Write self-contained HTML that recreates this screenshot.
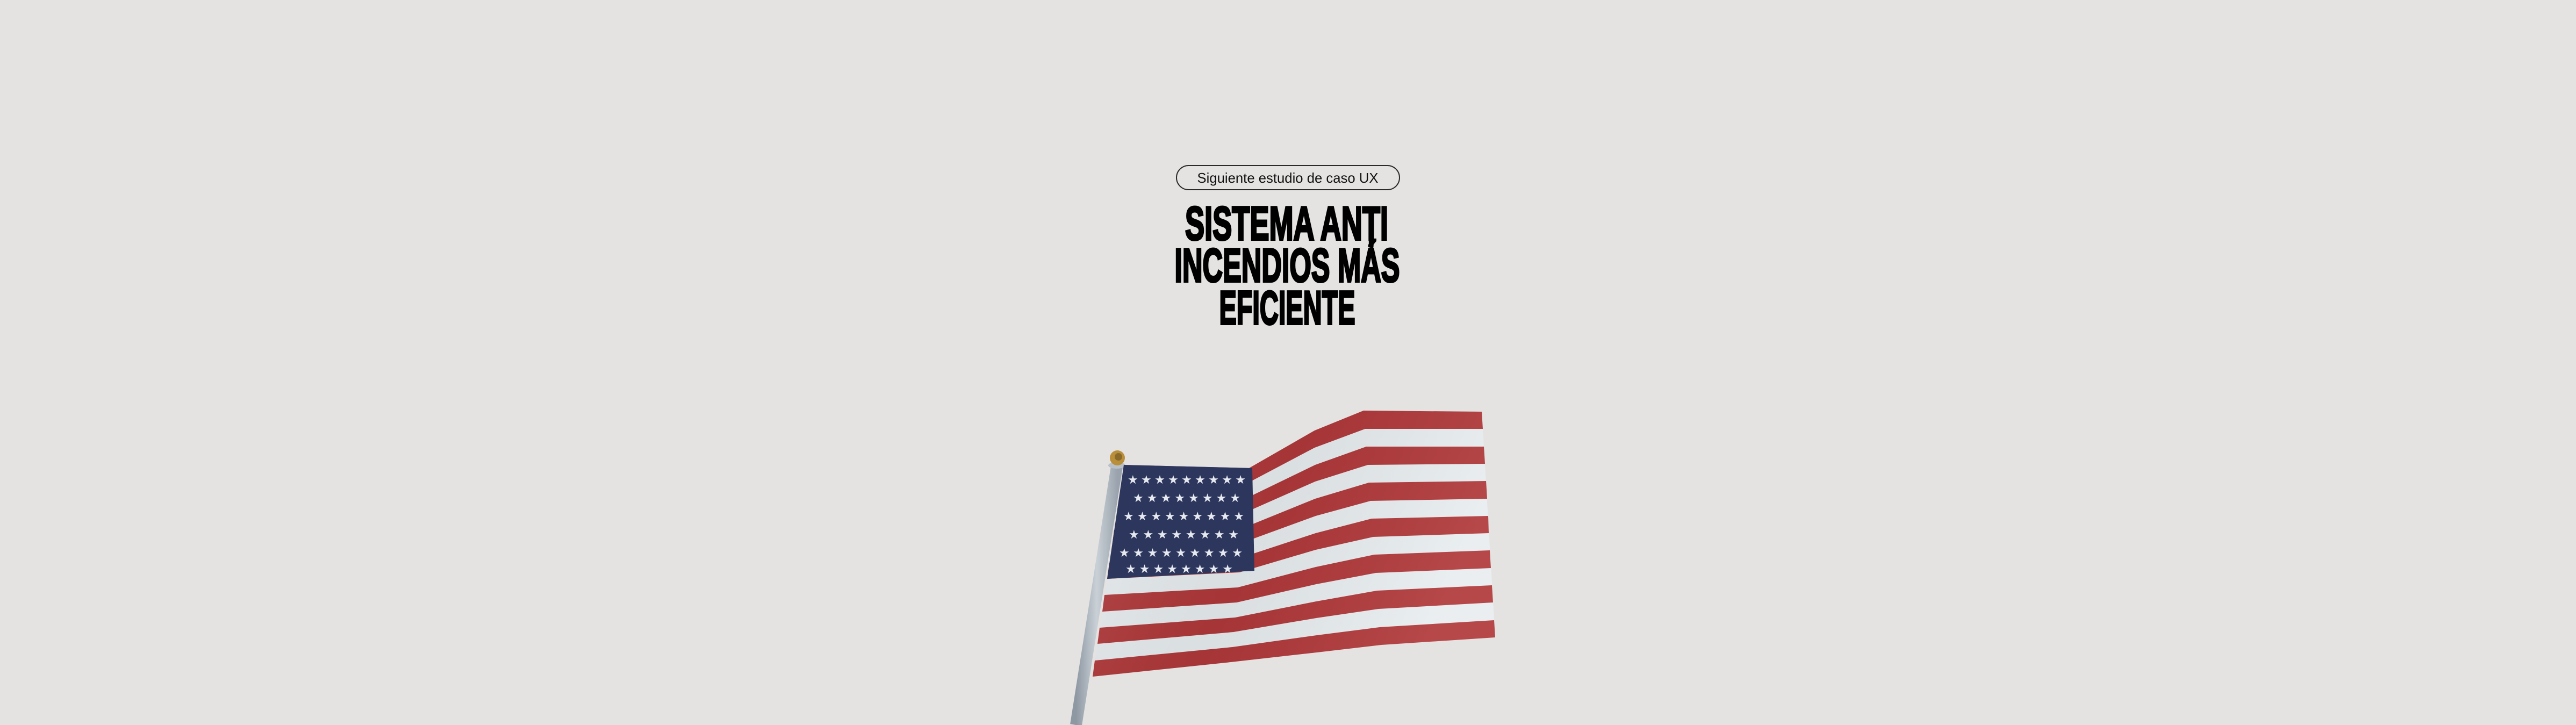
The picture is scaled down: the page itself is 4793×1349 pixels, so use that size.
<!DOCTYPE html>
<html><head><meta charset="utf-8"><style>
html,body{margin:0;padding:0;background:#e4e3e1;}
body{width:4793px;height:1349px;overflow:hidden;position:relative;}
svg{position:absolute;left:0;top:0;}
</style></head><body>
<svg width="4793" height="1349" viewBox="0 0 4793 1349" xmlns="http://www.w3.org/2000/svg">
<defs>
<linearGradient id="pole" x1="0" x2="1" y1="0" y2="0">
<stop offset="0" stop-color="#8e98a3"/><stop offset="0.5" stop-color="#c9d0d6"/><stop offset="1" stop-color="#9aa3ad"/>
</linearGradient>
<linearGradient id="shade" x1="0" x2="1" y1="0" y2="0.3">
<stop offset="0" stop-color="#fff" stop-opacity="0.12"/><stop offset="0.5" stop-color="#000" stop-opacity="0.06"/><stop offset="1" stop-color="#fff" stop-opacity="0.08"/>
</linearGradient>
</defs>
<!-- pill -->
<rect x="2189" y="308" width="415" height="45" rx="22.5" fill="none" stroke="#2a2a2a" stroke-width="2"/>
<text x="2396" y="340" text-anchor="middle" font-family="Liberation Sans, sans-serif" font-size="26" fill="#111" textLength="337" lengthAdjust="spacingAndGlyphs">Siguiente estudio de caso UX</text>
<!-- title -->
<g font-family="Liberation Sans, sans-serif" font-weight="bold" font-size="88" fill="#000" stroke="#000" stroke-width="4" text-anchor="middle">
<text x="2394" y="446" textLength="378" lengthAdjust="spacingAndGlyphs">SISTEMA ANȚI</text>
<text x="2395" y="524" textLength="419" lengthAdjust="spacingAndGlyphs">INCENDIOS MÁS</text>
<text x="2395" y="603" textLength="253" lengthAdjust="spacingAndGlyphs">EFICIENTE</text>
</g>
<!-- pole -->
<line x1="2079" y1="862" x2="2002" y2="1349" stroke="url(#pole)" stroke-width="22"/>
<ellipse cx="2078" cy="866" rx="16" ry="6" fill="#b8c0c8"/>
<circle cx="2079" cy="852" r="14" fill="#b98f3a"/>
<circle cx="2081" cy="850" r="7" fill="#6b5220" opacity="0.6"/>
<!-- flag -->
<polygon fill="#e8edf0" points="2091,865 2324,871 2446,801 2537,764 2757,766 2782,1186 2570,1200 2450,1214 2290,1232 2033,1259"/>
<g fill="#b0383a">
<polygon points="2091,865 2324,871 2446,801 2537,764 2757,766 2759,798 2540,798 2446,833 2321,899 2087,895"/>
<polygon points="2082,926 2319,927 2447,865 2542,831 2761,831 2763,863 2545,865 2447,896 2316,954 2078,956"/>
<polygon points="2073,986 2314,982 2447,928 2547,898 2765,895 2767,928 2550,932 2448,960 2311,1010 2069,1017"/>
<polygon points="2064,1047 2308,1038 2448,992 2552,965 2769,960 2770,992 2555,999 2448,1023 2306,1065 2060,1077"/>
<polygon points="2055,1107 2303,1093 2448,1055 2557,1032 2772,1024 2774,1057 2560,1066 2449,1087 2301,1121 2051,1138"/>
<polygon points="2046,1168 2298,1149 2449,1119 2562,1099 2776,1089 2778,1121 2565,1133 2449,1150 2295,1176 2042,1198"/>
<polygon points="2037,1229 2293,1204 2450,1182 2567,1167 2780,1154 2782,1186 2570,1200 2450,1214 2290,1232 2033,1259"/>
</g>
<polygon fill="url(#shade)" points="2091,865 2324,871 2446,801 2537,764 2757,766 2782,1186 2570,1200 2450,1214 2290,1232 2033,1259"/>
<polygon fill="#2d375e" points="2091,865 2330,871 2334,1062 2060,1077"/>
<g fill="#e6e9ef" font-family="DejaVu Sans, sans-serif" font-size="22">
<text x="2098" y="900" textLength="220">★ ★ ★ ★ ★ ★ ★ ★ ★</text>
<text x="2108" y="934" textLength="200">★ ★ ★ ★ ★ ★ ★ ★</text>
<text x="2090" y="968" textLength="225">★ ★ ★ ★ ★ ★ ★ ★ ★</text>
<text x="2100" y="1002" textLength="205">★ ★ ★ ★ ★ ★ ★ ★</text>
<text x="2082" y="1036" textLength="230">★ ★ ★ ★ ★ ★ ★ ★ ★</text>
<text x="2094" y="1066" textLength="200">★ ★ ★ ★ ★ ★ ★ ★</text>
</g>
</svg>
</body></html>
